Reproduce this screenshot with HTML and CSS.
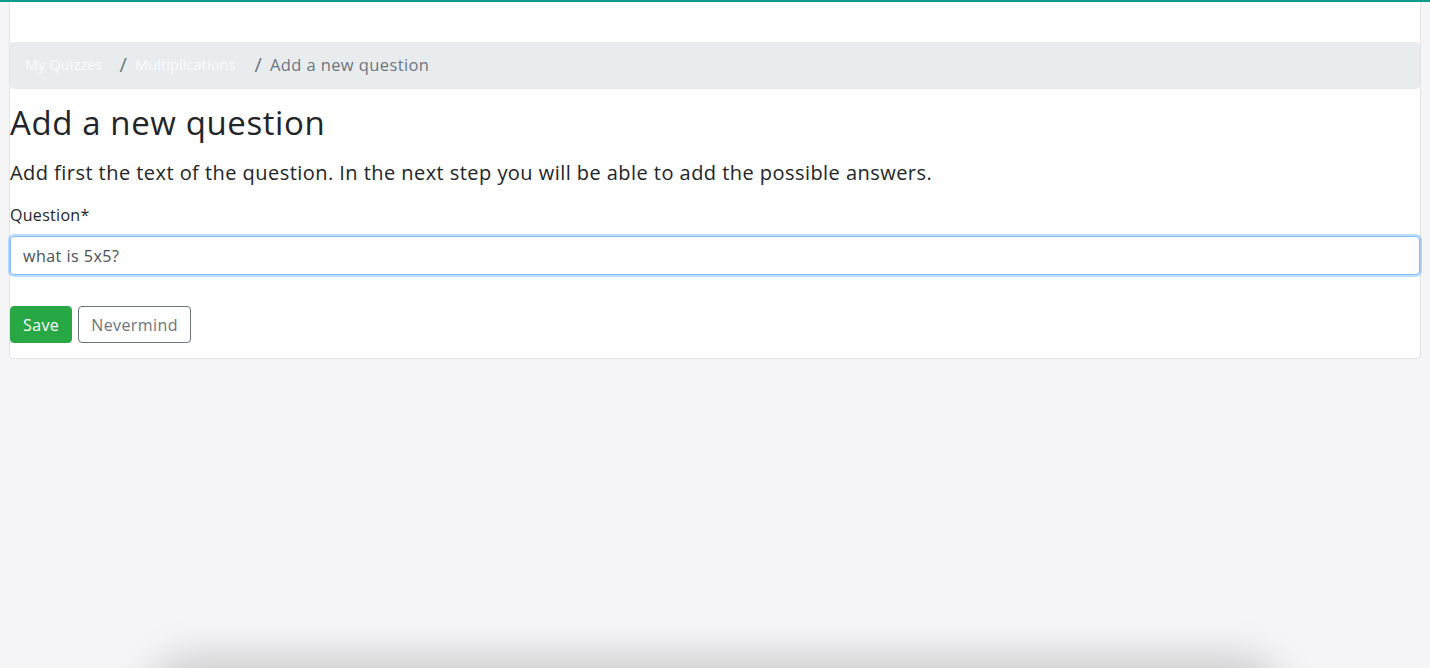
FILE: index.html
```html
<!DOCTYPE html>
<html lang="en">
<head>
<meta charset="utf-8">
<title>Add a new question</title>
<link rel="stylesheet" href="styles.css">
</head>
<body>
<div class="topline"></div>
<main class="card">
  <div class="card-spacer"></div>
  <nav class="breadcrumb">
    <a class="crumb-link" href="#">My Quizzes</a>
    <span class="sep">/</span>
    <a class="crumb-link" href="#">Multiplications</a>
    <span class="sep">/</span>
    <span class="crumb-active">Add a new question</span>
  </nav>
  <h1 class="title">Add a new question</h1>
  <p class="lead">Add first the text of the question. In the next step you will be able to add the possible answers.</p>
  <form class="form">
    <label class="label" for="q">Question*</label>
    <input class="input" id="q" type="text" value="what is 5x5?">
    <div class="actions">
      <button class="btn btn-save" type="button">Save</button>
      <button class="btn btn-cancel" type="button">Nevermind</button>
    </div>
  </form>
</main>
<div class="floating-shadow"></div>
</body>
</html>
```
FILE: styles.css
```css
* { box-sizing: border-box; }
html, body { height: 100%; }
body {
  margin: 0;
  background: #f5f5f7;
  font-family: "Open Sans", "Noto Sans", sans-serif;
  color: #212529;
  overflow: hidden;
}
.topline {
  height: 2px;
  background: #0f9d8a;
}
.card {
  margin: 0 9px 0 9px;
  background: #fff;
  border: 1px solid #e4e4e7;
  border-top: none;
  border-radius: 0 0 4px 4px;
  padding: 0 0 15px 0;
}
.card-spacer { height: 40px; }
.breadcrumb {
  display: flex;
  align-items: center;
  height: 47px;
  padding: 0 15px 2px 15px;
  background: #e9ecef;
  border-radius: 4px;
  font-size: 14.5px;
  letter-spacing: 0.1px;
}
.crumb-link {
  color: #fbfbfc;
  text-decoration: none;
}
.sep {
  color: #6c757d;
  font-size: 20px;
  margin: 0 8px 0 17px;
}
.sep + .crumb-link + .sep {
  margin-left: 19px;
}
.crumb-active {
  color: #6c757d;
  font-size: 16.5px;
  letter-spacing: 0.4px;
}
.title {
  margin: 14px 0 0 0;
  font-size: 33px;
  font-weight: 400;
  line-height: 40px;
  color: #212529;
  letter-spacing: 0.6px;
}
.lead {
  margin: 15px 0 0 0;
  font-size: 20px;
  line-height: 30px;
  color: #212529;
  letter-spacing: 0.45px;
}
.form { display: flex; flex-direction: column; }
.label {
  margin-top: 15px;
  font-size: 16px;
  line-height: 24px;
  color: #212529;
  letter-spacing: 0.3px;
}
.input {
  margin-top: 9px;
  height: 39px;
  padding: 0 12px;
  font-family: inherit;
  font-size: 16px;
  letter-spacing: 0.5px;
  color: #495057;
  border: 1px solid #80bdff;
  border-radius: 4px;
  box-shadow: 0 0 0 2px rgba(0,123,255,.25);
  outline: none;
}
.actions {
  display: flex;
  gap: 6px;
  margin-top: 31px;
}
.btn {
  height: 37px;
  padding: 0 12px;
  font-family: inherit;
  font-size: 16px;
  letter-spacing: 0.4px;
  border-radius: 4px;
  cursor: pointer;
}
.btn-save {
  background: #28a745;
  border: 1px solid #28a745;
  color: #fff;
}
.btn-cancel {
  background: #fff;
  border: 1px solid #6c757d;
  color: #6c757d;
}
.floating-shadow {
  position: fixed;
  left: 160px;
  right: 160px;
  bottom: -60px;
  height: 60px;
  border-radius: 30px;
  box-shadow: 0 0 40px 10px rgba(0,0,0,.18);
}
```
